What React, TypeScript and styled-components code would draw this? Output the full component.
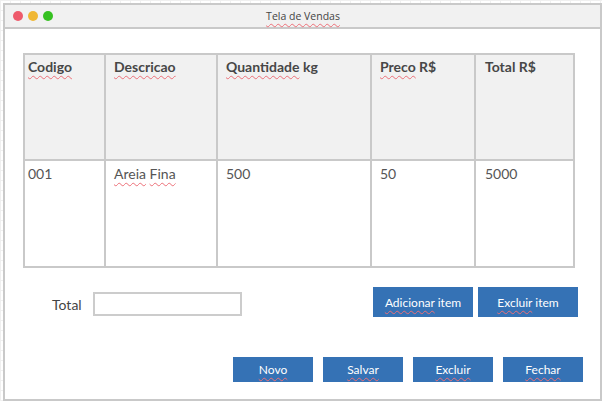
import React from "react";
import styled, { createGlobalStyle } from "styled-components";

const GlobalStyle = createGlobalStyle`
  html, body {
    margin: 0;
    padding: 0;
    width: 602px;
    height: 401px;
    overflow: hidden;
    background-color: #ffffff;
    background-image:
      linear-gradient(to right, #f0f0f0 1px, transparent 1px),
      linear-gradient(to bottom, #f0f0f0 1px, transparent 1px);
    background-size: 10px 10px;
    font-family: Lato, "Open Sans", sans-serif;
  }
`;

const Window = styled.div`
  box-sizing: border-box;
  margin: 3px 0 0 3px;
  width: 599px;
  height: 398px;
  border: 2px solid #c9c9c9;
  background: #ffffff;
  display: flex;
  flex-direction: column;
`;

const TitleBar = styled.div`
  position: relative;
  height: 22px;
  background: #f1f1f1;
  border-bottom: 2px solid #c9c9c9;
  display: flex;
  align-items: center;
  justify-content: center;
`;

const Dots = styled.div`
  position: absolute;
  left: 8px;
  top: 6px;
  display: flex;
  gap: 5px;
`;

const Dot = styled.span<{ $color: string }>`
  width: 10px;
  height: 10px;
  border-radius: 50%;
  background: ${(p) => p.$color};
`;

const Title = styled.span`
  font-family: "Open Sans", sans-serif;
  font-size: 10.5px;
  color: #444444;
  margin-left: 1px;
`;

const Spell = styled.span`
  text-decoration: underline wavy #ec6f78;
  text-decoration-thickness: 1px;
  text-underline-offset: 3px;
  text-decoration-skip-ink: none;
`;

const Content = styled.div`
  flex: 1;
  display: flex;
  flex-direction: column;
  padding-top: 24px;
`;

const Table = styled.div`
  margin-left: 18px;
  width: 552px;
  box-sizing: border-box;
  display: grid;
  grid-template-columns: 79px 110px 152px 102px 97px;
  grid-template-rows: 104px 105px;
  gap: 2px;
  padding: 2px;
  background: #c9c9c9;
`;

const HeadCell = styled.div<{ $pad: number }>`
  background: #f1f1f1;
  padding: 3px 0 0 ${(p) => p.$pad}px;
  font-size: 14px;
  line-height: 17px;
  font-weight: 700;
  color: #474747;
`;

const BodyCell = styled.div<{ $pad: number }>`
  background: #ffffff;
  padding: 4px 0 0 ${(p) => p.$pad}px;
  font-size: 14px;
  line-height: 17px;
  color: #555555;
`;

const ActionRow = styled.div`
  margin-top: 19px;
  display: flex;
  align-items: flex-start;
  padding-left: 47px;
`;

const TotalGroup = styled.div`
  display: flex;
  align-items: center;
  gap: 11px;
  margin-top: 5px;
`;

const Label = styled.span`
  font-size: 14px;
  color: #444444;
`;

const Input = styled.div`
  box-sizing: border-box;
  width: 149px;
  height: 24px;
  border: 2px solid #cccccc;
  background: #ffffff;
`;

const ItemButtons = styled.div`
  margin-left: auto;
  margin-right: 22px;
  display: flex;
  gap: 5px;
`;

const Button = styled.div<{ $w: number; $h: number }>`
  width: ${(p) => p.$w}px;
  height: ${(p) => p.$h}px;
  background: #3572b5;
  color: #ffffff;
  font-size: 12px;
  display: flex;
  align-items: center;
  justify-content: center;
`;

const FooterRow = styled.div`
  margin-top: 40px;
  display: flex;
  justify-content: flex-end;
  gap: 10px;
  padding-right: 17px;
`;

const headers: { text: React.ReactNode; pad: number }[] = [
  { text: <Spell>Codigo</Spell>, pad: 3 },
  { text: <Spell>Descricao</Spell>, pad: 8 },
  { text: <><Spell>Quantidade</Spell> kg</>, pad: 8 },
  { text: <><Spell>Preco</Spell> R$</>, pad: 8 },
  { text: "Total R$", pad: 9 },
];

const row: { text: React.ReactNode; pad: number }[] = [
  { text: "001", pad: 3 },
  { text: <><Spell>Areia</Spell> <Spell>Fina</Spell></>, pad: 8 },
  { text: "500", pad: 8 },
  { text: "50", pad: 8 },
  { text: "5000", pad: 9 },
];

export default function App() {
  return (
    <>
      <GlobalStyle />
      <Window>
        <TitleBar>
          <Dots>
            <Dot $color="#ee5a6b" />
            <Dot $color="#f0b733" />
            <Dot $color="#36c121" />
          </Dots>
          <Title>
            <Spell>Tela de Vendas</Spell>
          </Title>
        </TitleBar>
        <Content>
          <Table>
            {headers.map((h, i) => (
              <HeadCell key={"h" + i} $pad={h.pad}>
                {h.text}
              </HeadCell>
            ))}
            {row.map((c, i) => (
              <BodyCell key={"b" + i} $pad={c.pad}>
                {c.text}
              </BodyCell>
            ))}
          </Table>
          <ActionRow>
            <TotalGroup>
              <Label>Total</Label>
              <Input />
            </TotalGroup>
            <ItemButtons>
              <Button $w={100} $h={30}>
                <span>
                  <Spell>Adicionar</Spell> item
                </span>
              </Button>
              <Button $w={100} $h={30}>
                <span>
                  <Spell>Excluir</Spell> item
                </span>
              </Button>
            </ItemButtons>
          </ActionRow>
          <FooterRow>
            <Button $w={80} $h={25}>
              <Spell>Novo</Spell>
            </Button>
            <Button $w={80} $h={25}>
              <Spell>Salvar</Spell>
            </Button>
            <Button $w={80} $h={25}>
              <Spell>Excluir</Spell>
            </Button>
            <Button $w={80} $h={25}>
              <Spell>Fechar</Spell>
            </Button>
          </FooterRow>
        </Content>
      </Window>
    </>
  );
}
